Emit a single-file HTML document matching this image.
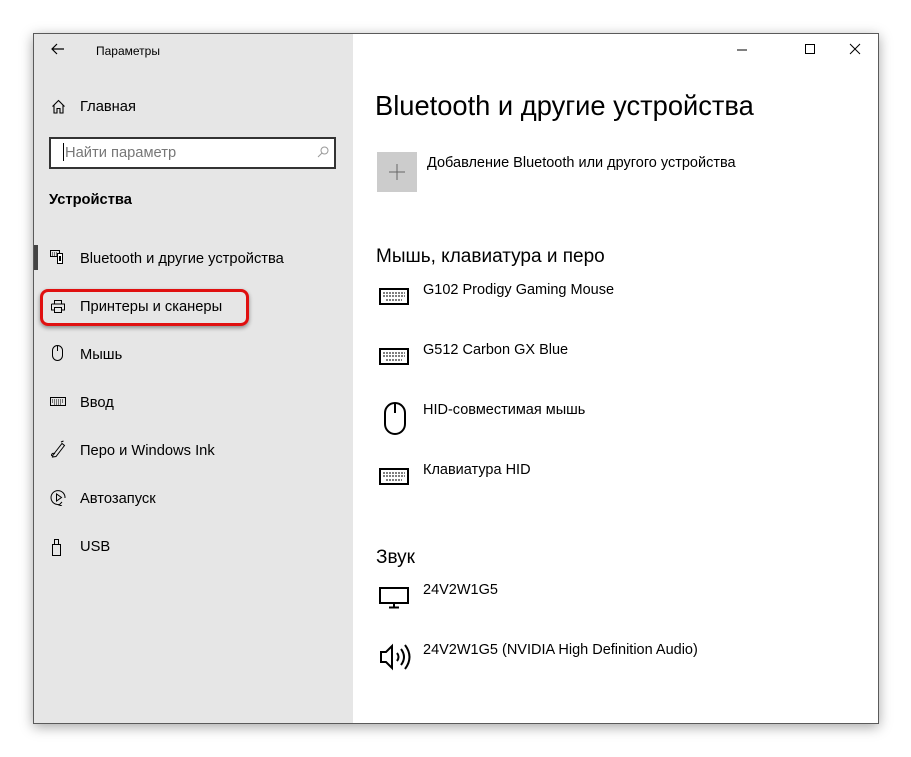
<!DOCTYPE html>
<html><head><meta charset="utf-8"><style>
body{margin:0;width:911px;height:757px;background:#fff;font-family:"Liberation Sans",sans-serif;position:relative;overflow:hidden;color:#000}
.win{position:absolute;left:33px;top:33px;width:844px;height:689px;border:1px solid #5a5a5a;background:#fff;box-shadow:0 3px 12px rgba(0,0,0,.35)}
.side{position:absolute;left:0;top:0;width:319px;height:689px;background:#e6e6e6}
.a{position:absolute;white-space:nowrap}
.nav{font-size:14.7px;color:#000}
.ic{position:absolute}
.it{font-size:14.5px}
</style></head><body>
<div class="win">
<div class="side">
 <svg class="ic" style="left:17px;top:9px" width="14" height="12"><path d="M1 6H13M6 1L1 6L6 11" stroke="#000" fill="none" stroke-width="1.2"/></svg>
 <div class="a" style="left:62px;top:10px;font-size:12px">Параметры</div>
 <svg class="ic" style="left:17px;top:65px" width="15" height="15"><path d="M1.5 7.5L7.5 1.5L13.5 7.5M3 6V14H6V9.5H9V14H12V6" stroke="#000" fill="none" stroke-width="1.1"/></svg>
 <div class="a nav" style="left:46px;top:65px">Главная</div>
 <div class="a" style="left:15px;top:103px;width:283px;height:28px;border:2px solid #333;background:#fff"></div>
 <div class="a" style="left:29px;top:109px;width:1px;height:18px;background:#000"></div>
 <div class="a" style="left:31px;top:111px;font-size:14.7px;color:#777">Найти параметр</div>
 <svg class="ic" style="left:283px;top:112px" width="12" height="12"><circle cx="7.5" cy="4.5" r="3.5" stroke="#999" fill="none"/><path d="M5 7L1 11" stroke="#999"/></svg>
 <div class="a" style="left:15px;top:158px;font-size:14.7px;font-weight:bold">Устройства</div>
 <div class="a" style="left:0;top:211px;width:4px;height:25px;background:#444"></div>
 <svg class="ic" style="left:16px;top:216px" width="14" height="14"><rect x="0.5" y="0.5" width="9" height="6" fill="none" stroke="#000"/><path d="M2 3h6M2 5h6" stroke="#000" stroke-dasharray="1 1"/><rect x="7.5" y="3.5" width="5" height="10" fill="#fff" stroke="#000"/><rect x="9" y="6" width="2" height="5" fill="#000"/></svg>
 <div class="a nav" style="left:46px;top:217px">Bluetooth и другие устройства</div>
 <div class="a" style="left:6px;top:255px;width:203px;height:31px;border:3px solid #e01010;border-radius:8px;box-shadow:0 2px 4px rgba(0,0,0,.4)"></div>
 <svg class="ic" style="left:16px;top:265px" width="16" height="15"><path d="M4.5 5V1.5h7V5M1.5 5h13v6h-3M4.5 11h-3V5M4.5 8.5h7v5h-7z" stroke="#000" fill="none"/></svg>
 <div class="a nav" style="left:46px;top:265px">Принтеры и сканеры</div>
 <svg class="ic" style="left:18px;top:311px" width="12" height="17"><rect x="0.5" y="0.5" width="10" height="15" rx="5" fill="none" stroke="#000"/><path d="M5.5 1v5" stroke="#000"/></svg>
 <div class="a nav" style="left:46px;top:313px">Мышь</div>
 <svg class="ic" style="left:16px;top:363px" width="16" height="10"><rect x="0.5" y="0.5" width="15" height="8" fill="none" stroke="#000"/><path d="M2 3h12M2 5h12M4 7h8" stroke="#000" stroke-dasharray="1 1"/></svg>
 <div class="a nav" style="left:46px;top:361px">Ввод</div>
 <svg class="ic" style="left:16px;top:406px" width="16" height="18"><path d="M3 15L12 3.5L14.5 5.5L6 16.5L2.5 17ZM11 2L13.5 1M5 14c-3-2-4 1-3 2" stroke="#000" fill="none" stroke-width="1"/></svg>
 <div class="a nav" style="left:46px;top:409px">Перо и Windows Ink</div>
 <svg class="ic" style="left:16px;top:455px" width="17" height="17"><path d="M9 15.5A7 7 0 1 1 15 9" stroke="#000" fill="none"/><path d="M12 13l-3 3l3 1" stroke="#000" fill="none"/><path d="M6.5 5v7l5-3.5z" stroke="#000" fill="none"/></svg>
 <div class="a nav" style="left:46px;top:457px">Автозапуск</div>
 <svg class="ic" style="left:18px;top:505px" width="10" height="17"><rect x="0.5" y="5.5" width="8" height="11" fill="none" stroke="#000"/><rect x="2.5" y="0.5" width="4" height="5" fill="none" stroke="#000"/></svg>
 <div class="a nav" style="left:46px;top:505px">USB</div>
</div>
<svg class="ic" style="left:702px;top:14px" width="12" height="4"><path d="M1 2h10" stroke="#000"/></svg>
<svg class="ic" style="left:770px;top:9px" width="12" height="12"><rect x="1.5" y="1.5" width="9" height="9" fill="none" stroke="#000"/></svg>
<svg class="ic" style="left:815px;top:9px" width="12" height="12"><path d="M1 1l10 10M11 1L1 11" stroke="#000"/></svg>
<div class="a" style="left:341px;top:56px;font-size:27.3px">Bluetooth и другие устройства</div>
<div class="a" style="left:343px;top:118px;width:40px;height:40px;background:#cccccc"></div>
<svg class="ic" style="left:355px;top:130px" width="16" height="16"><path d="M8 0v16M0 8h16" stroke="#666"/></svg>
<div class="a it" style="left:393px;top:121px">Добавление Bluetooth или другого устройства</div>
<div class="a" style="left:342px;top:212px;font-size:19px">Мышь, клавиатура и перо</div>
<div class="a" style="left:342px;top:513px;font-size:19px">Звук</div>
<svg class="ic" style="left:345px;top:254px" width="30" height="18"><rect x="1" y="1" width="28" height="15" fill="none" stroke="#000" stroke-width="2"/><path d="M4 5h22M4 8h22M7 12h16" stroke="#000" stroke-dasharray="2 1"/></svg>
<div class="a it" style="left:389px;top:248px">G102 Prodigy Gaming Mouse</div>
<svg class="ic" style="left:345px;top:314px" width="30" height="18"><rect x="1" y="1" width="28" height="15" fill="none" stroke="#000" stroke-width="2"/><path d="M4 5h22M4 8h22M7 12h16" stroke="#000" stroke-dasharray="2 1"/></svg>
<div class="a it" style="left:389px;top:308px">G512 Carbon GX Blue</div>
<svg class="ic" style="left:350px;top:368px" width="22" height="34"><rect x="1" y="1" width="20" height="31" rx="10" fill="none" stroke="#000" stroke-width="2"/><path d="M11 1v10" stroke="#000" stroke-width="2"/></svg>
<div class="a it" style="left:389px;top:368px">HID-совместимая мышь</div>
<svg class="ic" style="left:345px;top:434px" width="30" height="18"><rect x="1" y="1" width="28" height="15" fill="none" stroke="#000" stroke-width="2"/><path d="M4 5h22M4 8h22M7 12h16" stroke="#000" stroke-dasharray="2 1"/></svg>
<div class="a it" style="left:389px;top:428px">Клавиатура HID</div>
<svg class="ic" style="left:345px;top:553px" width="30" height="22"><rect x="1" y="1" width="28" height="15" fill="none" stroke="#000" stroke-width="2"/><path d="M15 16v4M10 20.5h10" stroke="#000" stroke-width="2"/></svg>
<div class="a it" style="left:389px;top:548px">24V2W1G5</div>
<svg class="ic" style="left:345px;top:609px" width="32" height="28"><path d="M2 9h5l6-6v22l-6-6H2z" fill="none" stroke="#000" stroke-width="2"/><path d="M18 10q3 4 0 8M22 6q6 8 0 16M26 2q9 12 0 24" fill="none" stroke="#000" stroke-width="2"/></svg>
<div class="a it" style="left:389px;top:608px">24V2W1G5 (NVIDIA High Definition Audio)</div>
</div>
</body></html>
